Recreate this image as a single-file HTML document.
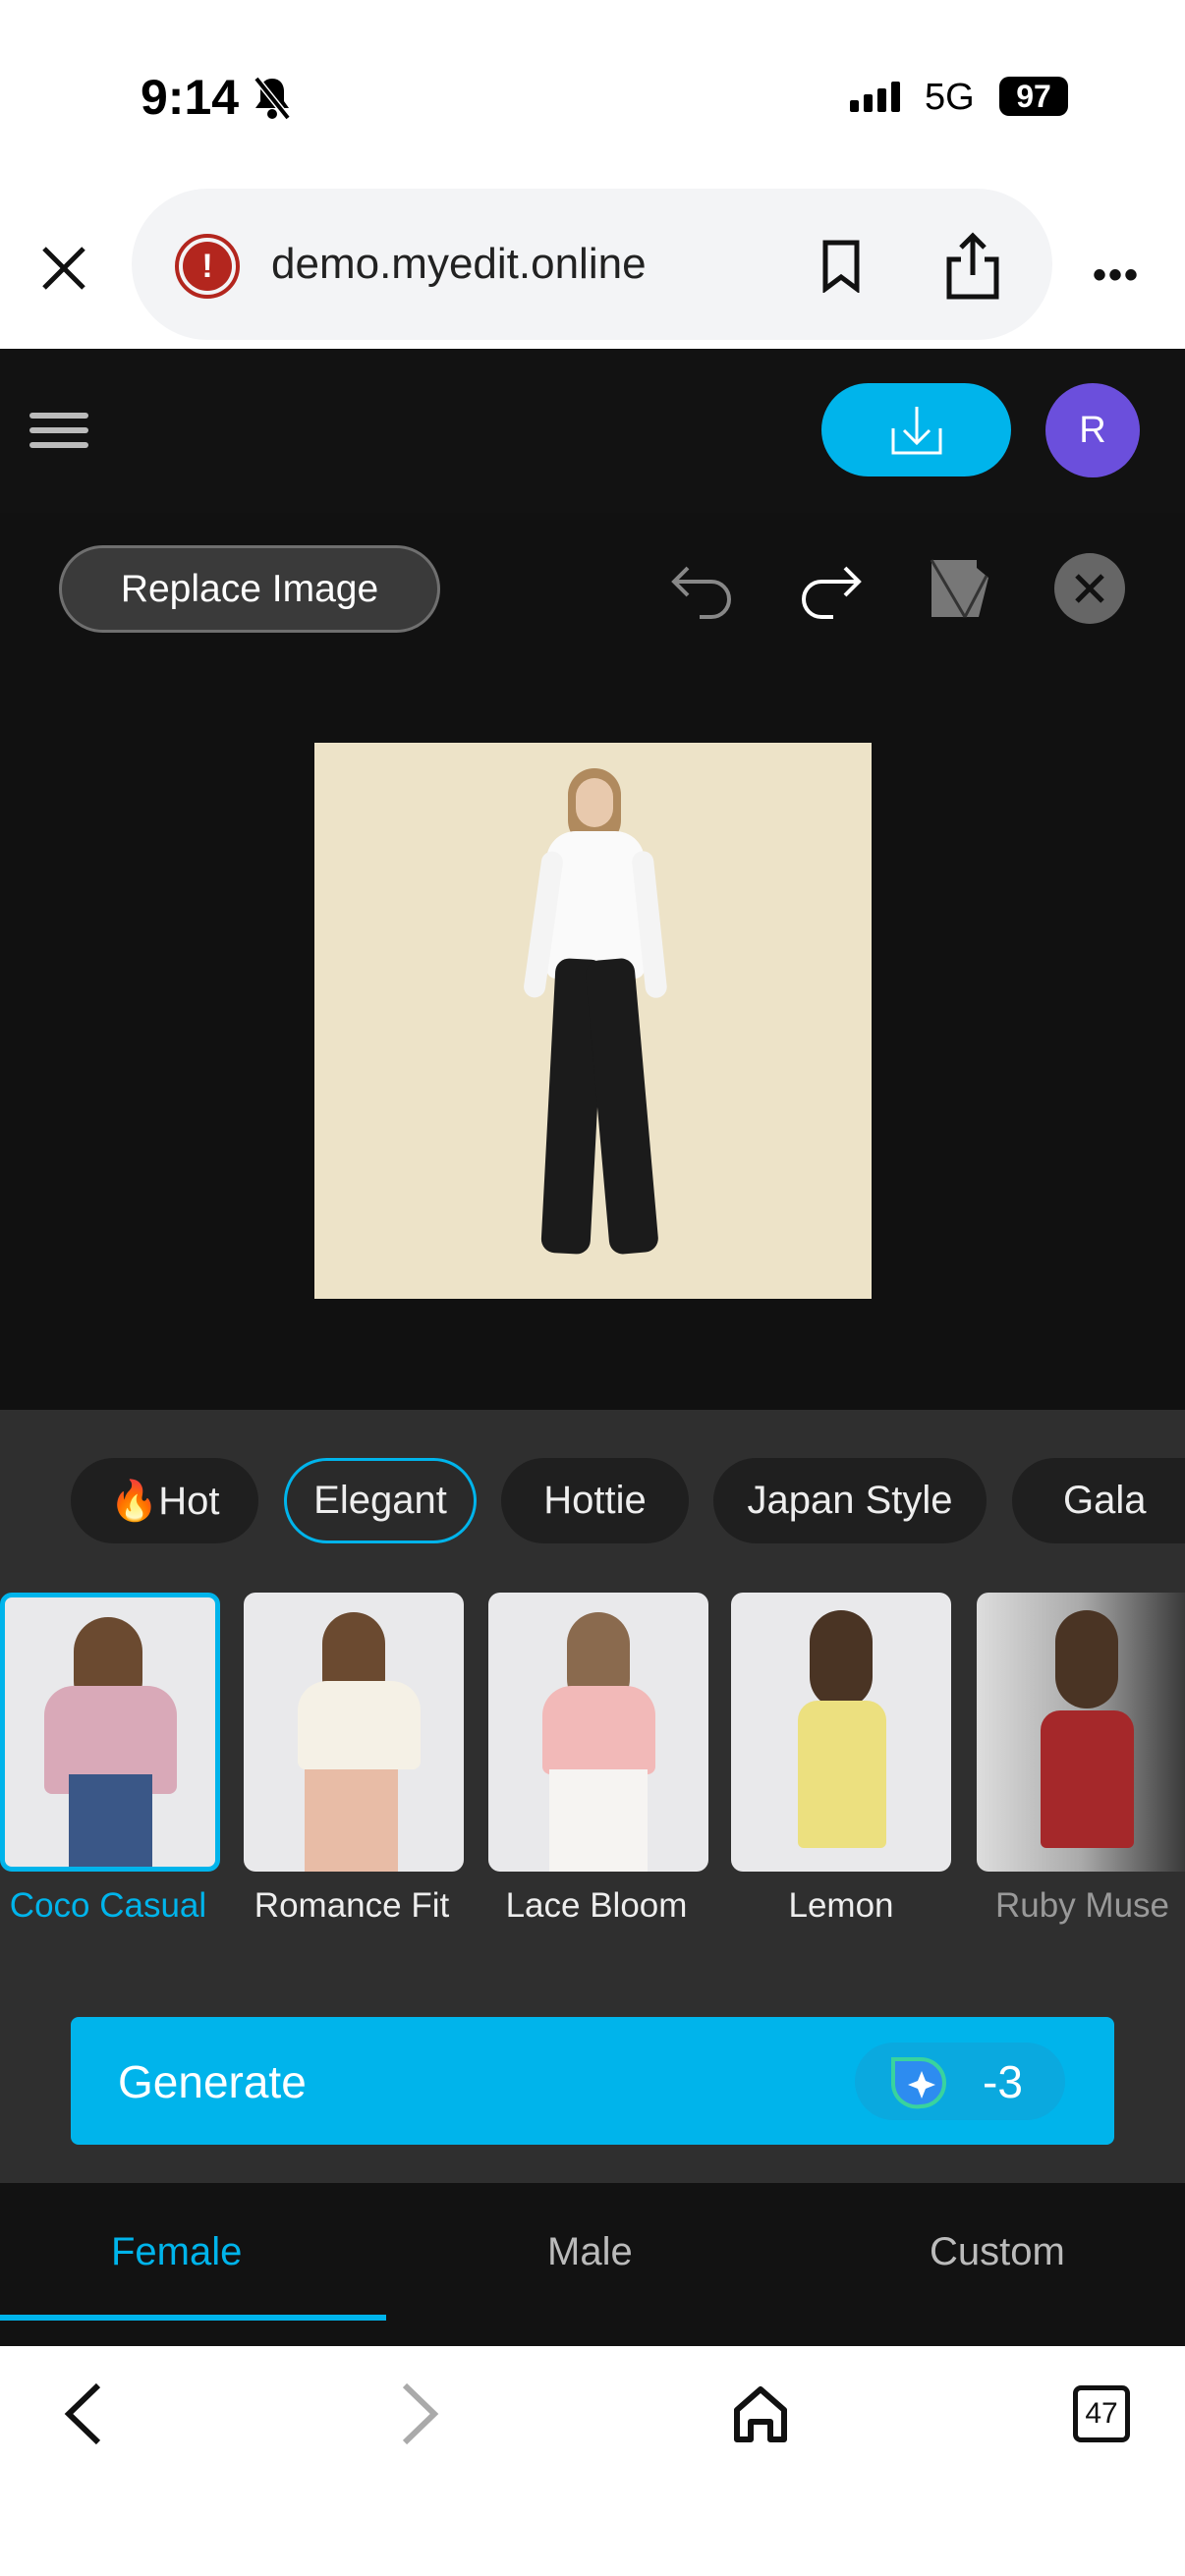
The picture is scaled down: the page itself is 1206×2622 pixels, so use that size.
<!DOCTYPE html>
<html><head><meta charset="utf-8"><style>
*{margin:0;padding:0;box-sizing:border-box}
body{width:1206px;height:2622px;position:relative;background:#fff;font-family:"Liberation Sans",sans-serif;overflow:hidden}
.a{position:absolute}
.chip{position:absolute;top:1484px;height:87px;border-radius:44px;background:#1f1f1f;color:#eee;font-size:40px;display:flex;align-items:center;justify-content:center}
.th{position:absolute;top:1621px;width:224px;height:284px;border-radius:12px;background:#e9e9eb;overflow:hidden}
.lb{position:absolute;top:1920px;font-size:35px;color:#eee;text-align:center;width:250px}
.tab{position:absolute;top:2270px;font-size:40px;color:#bbb}
</style></head><body>
<div class="a" style="left:143px;top:70px;font-size:50px;font-weight:bold;color:#000">9:14</div>
<svg class="a" style="left:255px;top:76px" width="44" height="46" viewBox="0 0 44 46"><path d="M22 4c-8 0-12 6-12 13v10l-5 7h34l-5-7V17c0-7-4-13-12-13z" fill="#000"/><circle cx="22" cy="40" r="5" fill="#000"/><path d="M6 4l32 40" stroke="#fff" stroke-width="7"/><path d="M6 4l32 40" stroke="#000" stroke-width="4"/></svg>
<div class="a" style="left:865px;top:102px;width:9px;height:12px;background:#000;border-radius:2px"></div>
<div class="a" style="left:879px;top:96px;width:9px;height:18px;background:#000;border-radius:2px"></div>
<div class="a" style="left:893px;top:90px;width:9px;height:24px;background:#000;border-radius:2px"></div>
<div class="a" style="left:907px;top:83px;width:9px;height:31px;background:#000;border-radius:2px"></div>
<div class="a" style="left:941px;top:78px;font-size:38px;color:#000">5G</div>
<div class="a" style="left:1017px;top:78px;width:70px;height:40px;background:#000;border-radius:10px;color:#fff;font-weight:bold;font-size:32px;text-align:center;line-height:40px">97</div>
<svg class="a" style="left:40px;top:248px" width="50" height="50"><path d="M5 5L45 45M45 5L5 45" stroke="#111" stroke-width="5"/></svg>
<div class="a" style="left:134px;top:192px;width:937px;height:154px;border-radius:77px;background:#f3f4f6"></div>
<div class="a" style="left:178px;top:238px;width:66px;height:66px;border-radius:50%;border:4px solid #b3261e;padding:4px"><div style="width:100%;height:100%;border-radius:50%;background:#b3261e;color:#fff;font-weight:bold;font-size:34px;text-align:center;line-height:50px">!</div></div>
<div class="a" style="left:276px;top:244px;font-size:44px;color:#222">demo.myedit.online</div>
<svg class="a" style="left:836px;top:244px" width="40" height="54"><path d="M4 3h32v47L20 38 4 50z" fill="none" stroke="#111" stroke-width="5"/></svg>
<svg class="a" style="left:958px;top:234px" width="64" height="72"><path d="M20 30H8v38h48V30H44M32 46V6M20 18L32 6l12 12" fill="none" stroke="#111" stroke-width="5"/></svg>
<div class="a" style="left:1112px;top:258px;font-size:40px;color:#111;letter-spacing:2px;font-weight:bold">•••</div>
<div class="a" style="left:0;top:355px;width:1206px;height:167px;background:#121212"></div>
<div class="a" style="left:30px;top:420px;width:60px;height:6px;background:#bbb;border-radius:3px"></div>
<div class="a" style="left:30px;top:435px;width:60px;height:6px;background:#bbb;border-radius:3px"></div>
<div class="a" style="left:30px;top:450px;width:60px;height:6px;background:#bbb;border-radius:3px"></div>
<div class="a" style="left:836px;top:390px;width:193px;height:95px;border-radius:48px;background:#00b4eb"></div>
<svg class="a" style="left:906px;top:412px" width="54" height="52"><path d="M27 2v36M14 26l13 13 13-13M3 24v25h48V24" fill="none" stroke="#fff" stroke-width="3"/></svg>
<div class="a" style="left:1064px;top:390px;width:96px;height:96px;border-radius:50%;background:#6b4fdc;color:#fff;font-size:38px;text-align:center;line-height:96px">R</div>
<div class="a" style="left:0;top:522px;width:1206px;height:913px;background:#111"></div>
<div class="a" style="left:60px;top:555px;width:388px;height:89px;border-radius:45px;background:#3a3a3a;border:3px solid #6f6f6f;color:#fff;font-size:39px;text-align:center;line-height:83px">Replace Image</div>
<svg class="a" style="left:680px;top:570px" width="70" height="62"><path d="M8 22h36a18 18 0 010 36H32M20 8L6 22l14 14" fill="none" stroke="#888" stroke-width="4"/></svg>
<svg class="a" style="left:810px;top:570px" width="70" height="62"><path d="M62 22H26a18 18 0 000 36h12M50 8l14 14-14 14" fill="none" stroke="#fff" stroke-width="4"/></svg>
<svg class="a" style="left:944px;top:566px" width="68" height="68"><path d="M4 4h46v8l12 10-10 40H4z" fill="#777"/><path d="M4 4l34 58M38 62L60 20" stroke="#333" stroke-width="3" fill="none"/></svg>
<div class="a" style="left:1073px;top:563px;width:72px;height:72px;border-radius:50%;background:#666"></div>
<svg class="a" style="left:1090px;top:580px" width="38" height="38"><path d="M6 6l26 26M32 6L6 32" stroke="#111" stroke-width="5"/></svg>
<div class="a" style="left:320px;top:756px;width:567px;height:566px;background:#ede3c8;overflow:hidden">
 <div class="a" style="left:258px;top:26px;width:54px;height:80px;border-radius:27px;background:#b08a5e"></div>
 <div class="a" style="left:266px;top:36px;width:38px;height:50px;border-radius:19px;background:#e8c9ad"></div>
 <div class="a" style="left:236px;top:90px;width:100px;height:150px;border-radius:30px 30px 10px 10px;background:#fafafa"></div>
 <div class="a" style="left:222px;top:110px;width:22px;height:150px;border-radius:11px;background:#f4f4f4;transform:rotate(8deg)"></div>
 <div class="a" style="left:330px;top:110px;width:22px;height:150px;border-radius:11px;background:#f4f4f4;transform:rotate(-6deg)"></div>
 <div class="a" style="left:238px;top:220px;width:50px;height:300px;border-radius:14px;background:#1b1b1b;transform:rotate(3deg)"></div>
 <div class="a" style="left:288px;top:220px;width:50px;height:300px;border-radius:14px;background:#1b1b1b;transform:rotate(-5deg)"></div>
</div>
<div class="a" style="left:0;top:1435px;width:1206px;height:787px;background:#2f2f2f"></div>
<div class="chip" style="left:72px;width:191px">🔥Hot</div>
<div class="chip" style="left:289px;width:196px;background:#2a2a2a;border:3px solid #00b4eb">Elegant</div>
<div class="chip" style="left:510px;width:191px">Hottie</div>
<div class="chip" style="left:726px;width:278px">Japan Style</div>
<div class="chip" style="left:1030px;width:220px;justify-content:flex-start;padding-left:52px">Gala</div>
<div class="th" style="left:0;border:5px solid #00b4eb"><div class="a" style="left:70px;top:20px;width:70px;height:100px;border-radius:35px;background:#6b4a30"></div><div class="a" style="left:40px;top:90px;width:135px;height:110px;border-radius:30px 30px 8px 8px;background:#d9a9b8"></div><div class="a" style="left:65px;top:180px;width:85px;height:110px;background:#3a5787"></div></div>
<div class="th" style="left:248px"><div class="a" style="left:80px;top:20px;width:64px;height:100px;border-radius:32px;background:#6b4a30"></div><div class="a" style="left:55px;top:90px;width:125px;height:90px;border-radius:30px 30px 8px 8px;background:#f5f1e6"></div><div class="a" style="left:62px;top:180px;width:95px;height:110px;background:#e8bca6"></div></div>
<div class="th" style="left:497px"><div class="a" style="left:80px;top:20px;width:64px;height:100px;border-radius:32px;background:#8a6a4e"></div><div class="a" style="left:55px;top:95px;width:115px;height:90px;border-radius:30px 30px 8px 8px;background:#f2b9b8"></div><div class="a" style="left:62px;top:180px;width:100px;height:110px;background:#f6f4f2"></div></div>
<div class="th" style="left:744px"><div class="a" style="left:80px;top:18px;width:64px;height:100px;border-radius:32px;background:#4a3424"></div><div class="a" style="left:68px;top:110px;width:90px;height:150px;border-radius:20px 20px 6px 6px;background:#ece07f"></div></div>
<div class="th" style="left:994px;width:212px;border-radius:12px 0 0 12px;background:linear-gradient(90deg,#ddd,#aaa 50%,#3a3a3a)"><div class="a" style="left:80px;top:18px;width:64px;height:100px;border-radius:32px;background:#4a3424"></div><div class="a" style="left:65px;top:120px;width:95px;height:140px;border-radius:20px 20px 6px 6px;background:#a5282a"></div></div>
<div class="lb" style="left:-15px;color:#00b4eb">Coco Casual</div>
<div class="lb" style="left:233px">Romance Fit</div>
<div class="lb" style="left:482px">Lace Bloom</div>
<div class="lb" style="left:731px">Lemon</div>
<div class="lb" style="left:980px;color:#999;text-align:left;padding-left:33px;white-space:nowrap">Ruby Muse</div>
<div class="a" style="left:72px;top:2053px;width:1062px;height:130px;border-radius:8px;background:#00b4eb"></div>
<div class="a" style="left:120px;top:2092px;font-size:46px;color:#fff">Generate</div>
<div class="a" style="left:870px;top:2079px;width:214px;height:79px;border-radius:40px;background:#0aa9df"></div>
<svg class="a" style="left:906px;top:2092px" width="60" height="56"><path d="M3 4h28a22 22 0 010 48 24 24 0 01-28-22z" fill="#2d8cf0" stroke="#39d39e" stroke-width="4"/><path d="M32 16l4 10 10 4-10 4-4 10-4-10-10-4 10-4z" fill="#fff"/></svg>
<div class="a" style="left:1000px;top:2092px;font-size:46px;color:#fff">-3</div>
<div class="a" style="left:0;top:2222px;width:1206px;height:166px;background:#121212"></div>
<div class="tab" style="left:113px;color:#00b4eb">Female</div>
<div class="tab" style="left:557px">Male</div>
<div class="tab" style="left:946px">Custom</div>
<div class="a" style="left:0;top:2356px;width:393px;height:6px;background:#00b4eb"></div>
<svg class="a" style="left:60px;top:2424px" width="50" height="66"><path d="M40 4L10 33l30 29" fill="none" stroke="#111" stroke-width="6"/></svg>
<svg class="a" style="left:402px;top:2424px" width="50" height="66"><path d="M10 4l30 29-30 29" fill="none" stroke="#aaa" stroke-width="6"/></svg>
<svg class="a" style="left:744px;top:2427px" width="60" height="60"><path d="M6 56V26L30 5l24 21v30H40V38H20v18z" fill="none" stroke="#111" stroke-width="6" stroke-linejoin="round"/></svg>
<div class="a" style="left:1092px;top:2428px;width:58px;height:58px;border:5px solid #111;border-radius:8px;font-size:30px;text-align:center;line-height:48px;color:#111">47</div>
</body></html>
